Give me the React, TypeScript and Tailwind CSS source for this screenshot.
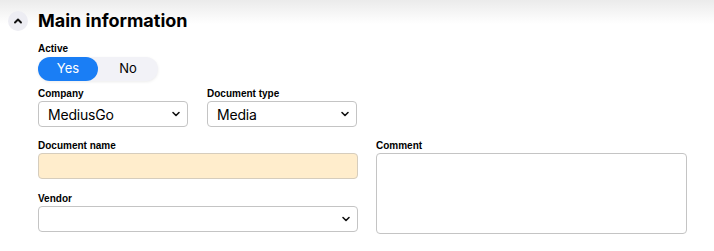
import { useState } from 'react';

const label = 'block text-[10px] font-bold leading-[12px] text-black font-["Liberation_Sans",Arial,sans-serif]';

function Chevron() {
  return (
    <svg width="10" height="10" viewBox="0 0 10 10" fill="none">
      <path d="M2 6.5 L5 3.5 L8 6.5" stroke="#111" strokeWidth="1.9" strokeLinecap="round" strokeLinejoin="round" />
    </svg>
  );
}

function SelectBox({ value, className }: { value: string; className: string }) {
  return (
    <div
      className={`flex h-[26px] items-center justify-between rounded-[4px] border border-[#c4c4c4] bg-white pl-[9px] pr-[6px] text-[14px] tracking-[-0.2px] text-black ${className}`}
    >
      <span>{value}</span>
      <svg width="10" height="10" viewBox="0 0 10 10" fill="none">
        <path d="M2 3.5 L5 6.5 L8 3.5" stroke="#111" strokeWidth="1.6" strokeLinecap="round" strokeLinejoin="round" />
      </svg>
    </div>
  );
}

export default function App() {
  const [active, setActive] = useState(true);

  return (
    <div className='relative h-[251px] w-[714px] overflow-hidden bg-white font-["Inter",sans-serif]'>
      <div className="pointer-events-none absolute inset-x-0 top-0 h-[24px] bg-gradient-to-b from-[#ebebeb] to-white/0" />

      <div className="relative flex items-center gap-[10px] pl-[8px] pt-[10px]">
        <button className="flex h-[20px] w-[20px] items-center justify-center rounded-full bg-[#ededf3]">
          <Chevron />
        </button>
        <h2 className="text-[18px] font-bold leading-[22px] text-black">Main information</h2>
      </div>

      <div className="pl-[38px] pt-[11px]">
        <span className={label}>Active</span>
        <div className="mt-[2px] flex h-[24px] w-[120px] rounded-full bg-[#f2f2f7] shadow-[0_1px_3px_rgba(0,0,0,0.08)] text-[13px]">
          <button
            onClick={() => setActive(true)}
            className={`w-[60px] rounded-full ${active ? 'bg-[#1a7ef5] text-white' : 'text-black'}`}
          >
            Yes
          </button>
          <button
            onClick={() => setActive(false)}
            className={`w-[60px] rounded-full ${!active ? 'bg-[#1a7ef5] text-white' : 'text-black'}`}
          >
            No
          </button>
        </div>

        <div className="mt-[7px] flex gap-[19px]">
          <div>
            <span className={label}>Company</span>
            <SelectBox value="MediusGo" className="mt-[1px] w-[150px]" />
          </div>
          <div>
            <span className={label}>Document type</span>
            <SelectBox value="Media" className="mt-[1px] w-[150px]" />
          </div>
        </div>

        <div className="mt-[13px] flex gap-[18px]">
          <div className="w-[320px]">
            <span className={label}>Document name</span>
            <div className="mt-[1px] h-[26px] rounded-[4px] border border-[#d6cdbd] bg-[#ffedcc]" />
            <span className={`${label} mt-[14px]`}>Vendor</span>
            <SelectBox value="" className="mt-[1px] w-[320px]" />
          </div>
          <div className="w-[311px]">
            <span className={label}>Comment</span>
            <div className="mt-[1px] h-[81px] rounded-[4px] border border-[#c4c4c4] bg-white" />
          </div>
        </div>
      </div>
    </div>
  );
}
